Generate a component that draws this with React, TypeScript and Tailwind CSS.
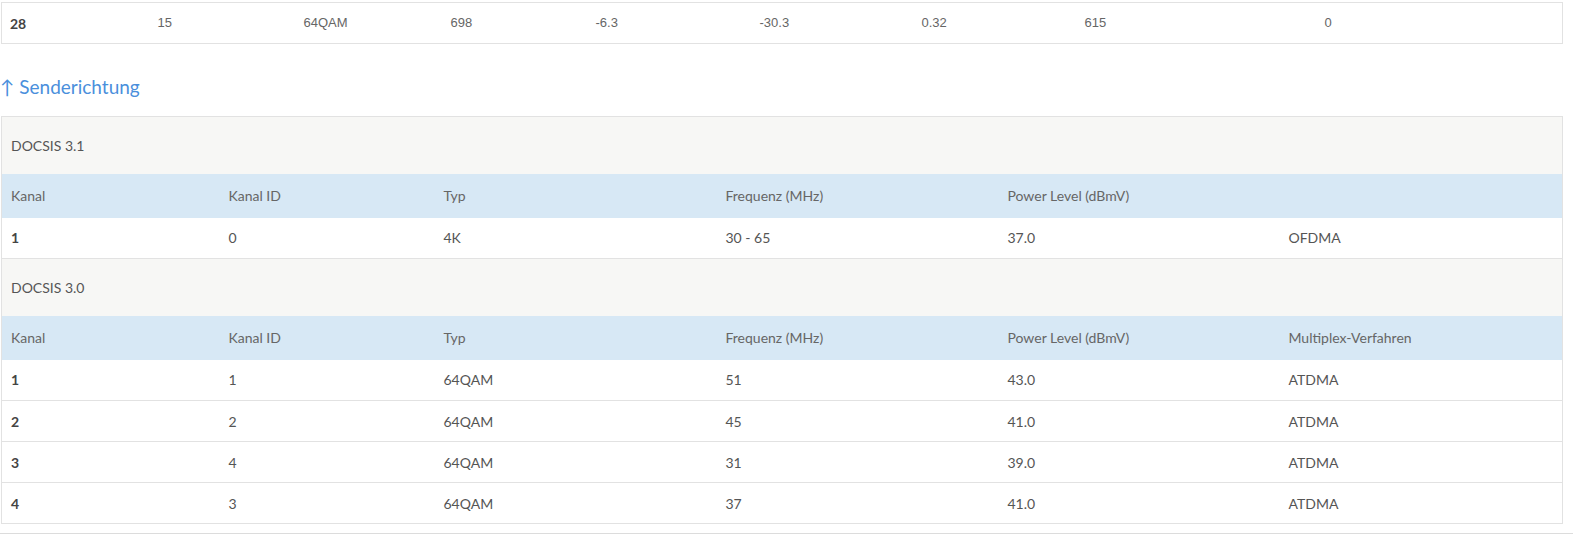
const top = ["28", "15", "64QAM", "698", "-6.3", "-30.3", "0.32", "615", "0"];
const topWidths = [148, 146, 147, 145, 164, 162, 163, 240, 246];

const colWidths = [218, 215, 282, 282, 281, 283];
const heads = ["Kanal", "Kanal ID", "Typ", "Frequenz (MHz)", "Power Level (dBmV)"];

const d31 = [["1", "0", "4K", "30 - 65", "37.0", "OFDMA"]];
const d30 = [
  ["1", "1", "64QAM", "51", "43.0", "ATDMA"],
  ["2", "2", "64QAM", "45", "41.0", "ATDMA"],
  ["3", "4", "64QAM", "31", "39.0", "ATDMA"],
  ["4", "3", "64QAM", "37", "41.0", "ATDMA"],
];

function Section({ title, rows, last }: { title: string; rows: string[][]; last?: string }) {
  return (
    <>
      <tr className="bg-[#f7f7f5]">
        <td colSpan={6} className="h-[57px] px-[9px] text-[#555]">
          {title}
        </td>
      </tr>
      <tr className="bg-[#d7e8f5]">
        {[...heads, last ?? ""].map((h, i) => (
          <td key={i} className="h-[44px] px-[9px] text-[#666]">
            {h}
          </td>
        ))}
      </tr>
      {rows.map((r, i) => (
        <tr key={i} className="border-b border-[#e2e2e2] bg-white">
          {r.map((c, j) => (
            <td key={j} className={`h-[41px] px-[9px] ${j === 0 ? "font-bold text-[#444]" : "text-[#555]"}`}>
              {c}
            </td>
          ))}
        </tr>
      ))}
    </>
  );
}

export default function App() {
  return (
    <div className="min-h-[540px] w-[1573px] bg-white font-['Lato','Liberation_Sans',sans-serif] text-[14px]">
      <div className="pl-px pt-[2px]">
        <table className="w-[1561px] table-fixed border-collapse border border-[#e2e2e2]">
          <colgroup>
            {topWidths.map((w, i) => (
              <col key={i} style={{ width: w }} />
            ))}
          </colgroup>
          <tbody>
            <tr>
              {top.map((c, i) => (
                <td
                  key={i}
                  className={`h-[41px] px-[8px] ${
                    i === 0 ? "font-bold text-[#444]" : "font-['Liberation_Sans',sans-serif] text-[13px] text-[#666]"
                  }`}
                >
                  {c}
                </td>
              ))}
            </tr>
          </tbody>
        </table>
      </div>

      <h3 className="mb-[14px] pt-[28px] text-[19px] leading-[30px] text-[#4a8fdc]">
        <span className="mr-[5px]">↑</span>Senderichtung
      </h3>

      <div className="pl-px">
        <table className="w-[1561px] table-fixed border-collapse border border-[#e2e2e2]">
          <colgroup>
            {colWidths.map((w, i) => (
              <col key={i} style={{ width: w }} />
            ))}
          </colgroup>
          <tbody>
            <Section title="DOCSIS 3.1" rows={d31} />
            <Section title="DOCSIS 3.0" rows={d30} last="Multiplex-Verfahren" />
          </tbody>
        </table>
      </div>
      <div className="mt-[9px] border-t border-[#dcdcdc]" />
    </div>
  );
}
